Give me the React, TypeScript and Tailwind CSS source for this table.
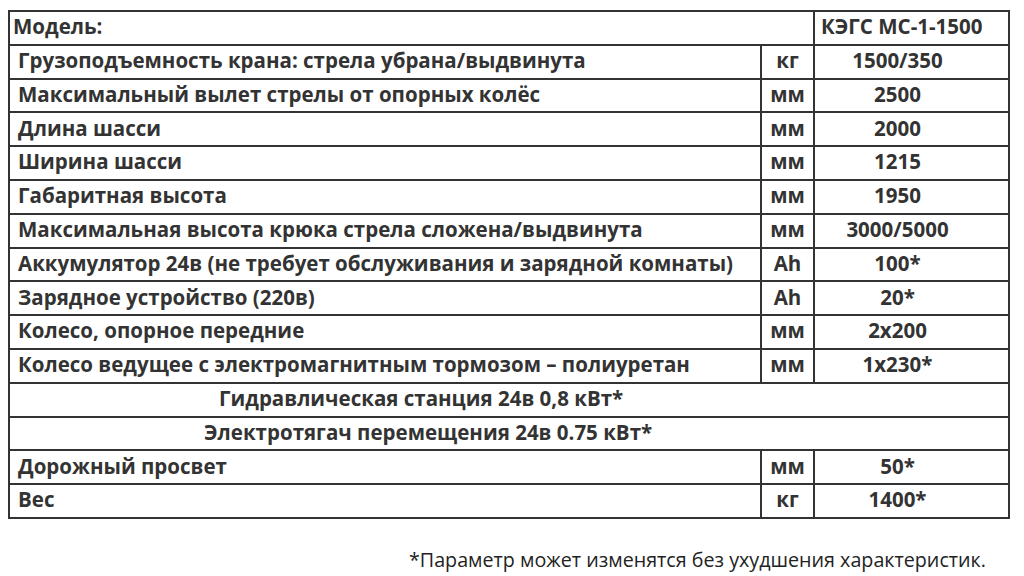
const rows: [string, string, string][] = [
  ['Грузоподъемность крана: стрела убрана/выдвинута', 'кг', '1500/350'],
  ['Максимальный вылет стрелы от опорных колёс', 'мм', '2500'],
  ['Длина шасси', 'мм', '2000'],
  ['Ширина шасси', 'мм', '1215'],
  ['Габаритная высота', 'мм', '1950'],
  ['Максимальная высота крюка стрела сложена/выдвинута', 'мм', '3000/5000'],
  ['Аккумулятор 24в (не требует обслуживания и зарядной комнаты)', 'Ah', '100*'],
  ['Зарядное устройство (220в)', 'Ah', '20*'],
  ['Колесо, опорное передние', 'мм', '2x200'],
  ['Колесо ведущее с электромагнитным тормозом – полиуретан', 'мм', '1x230*'],
];

const tail: [string, string, string][] = [
  ['Дорожный просвет', 'мм', '50*'],
  ['Вес', 'кг', '1400*'],
];

function Row({ name, unit, value }: { name: string; unit: string; value: string }) {
  return (
    <tr className="h-[33.8px]">
      <td className="border-2 border-[#333] pl-[8px] pb-[3px] w-[752px]">{name}</td>
      <td className="border-2 border-[#333] text-center pb-[3px] w-[53px]">{unit}</td>
      <td className="border-2 border-[#333] text-center pb-[3px] pr-[28px]">{value}</td>
    </tr>
  );
}

export default function App() {
  return (
    <div className="w-[1024px] h-[576px] bg-white text-[#333] font-['Open_Sans',sans-serif] relative">
      <div className="pt-[10px] pl-[8px]">
        <table className="border-collapse w-[1002px] text-[20.5px] font-bold leading-none">
          <tbody>
            <tr className="h-[33.8px]">
              <td colSpan={2} className="border-2 border-[#333] pl-[3px] pb-[3px]">Модель:</td>
              <td className="border-2 border-[#333] pl-[6px] pb-[3px]">КЭГС МС-1-1500</td>
            </tr>
            {rows.map((r) => (
              <Row key={r[0]} name={r[0]} unit={r[1]} value={r[2]} />
            ))}
            <tr className="h-[33.8px]">
              <td colSpan={3} className="border-2 border-[#333] pl-[209px] pb-[3px]">Гидравлическая станция 24в 0,8 кВт*</td>
            </tr>
            <tr className="h-[33.8px]">
              <td colSpan={3} className="border-2 border-[#333] pl-[194px] pb-[3px]">Электротягач перемещения 24в 0.75 кВт*</td>
            </tr>
            {tail.map((r) => (
              <Row key={r[0]} name={r[0]} unit={r[1]} value={r[2]} />
            ))}
          </tbody>
        </table>
      </div>
      <p className="absolute left-[409px] top-[545px] text-[19.7px] font-medium text-[#222]">
        *Параметр может изменятся без ухудшения характеристик.
      </p>
    </div>
  );
}
